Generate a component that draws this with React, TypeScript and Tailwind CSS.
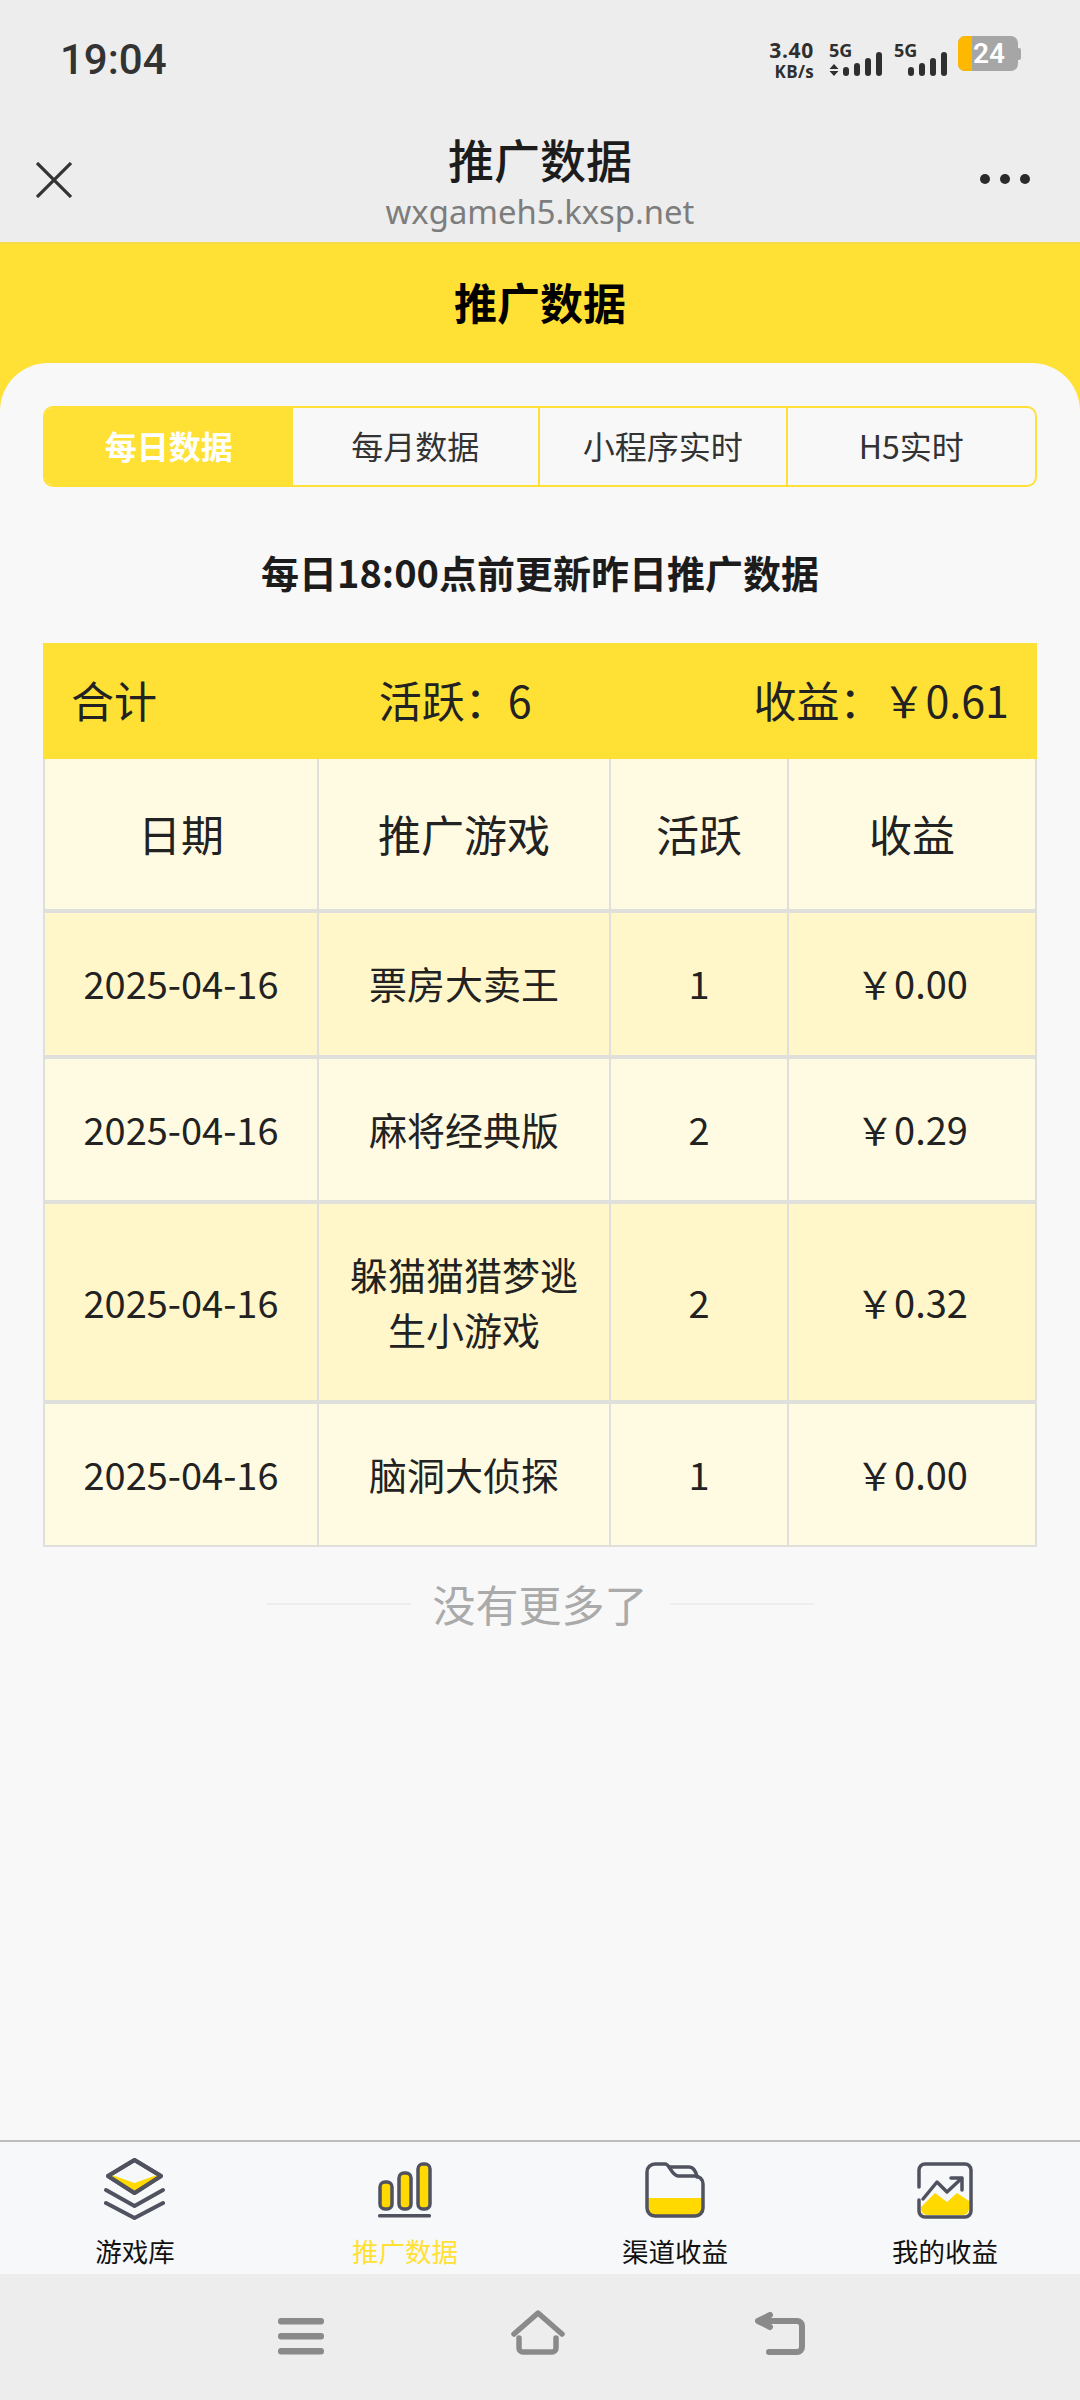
const Bars = ({ x }: { x: number }) => (
  <g fill="#2f2f2f">
    <rect x={x} y="15" width="6" height="9" rx="3" />
    <rect x={x + 11} y="11" width="6" height="13" rx="3" />
    <rect x={x + 22} y="6" width="6" height="18" rx="3" />
    <rect x={x + 33} y="0" width="6" height="24" rx="3" />
  </g>
);

const StatusBar = () => (
  <div className="h-[118px] flex items-start justify-between pl-[60px] pr-[60px] pt-[36px]">
    <div className="text-[42px] leading-[48px] font-medium text-[#333] font-['Roboto',sans-serif]">19:04</div>
    <div className="flex items-start font-['Open_Sans',sans-serif] font-bold text-[#2f2f2f] -mr-[1px] pt-[4px]">
      <div className="flex flex-col items-end">
        <span className="text-[21px] leading-[20px] tracking-[0.7px]">3.40</span>
        <span className="text-[17px] leading-[18px] mt-[3px] tracking-[0.3px]">KB/s</span>
      </div>
      <div className="ml-[15px] w-[54px]">
        <span className="text-[18px] leading-[20px] block">5G</span>
        <svg width="54" height="24" viewBox="0 0 54 24" className="mt-[-8px]">
          <path d="M0.5 17 L5 12 L9.5 17 Z M0.5 19 L9.5 19 L5 24 Z" fill="#2f2f2f" />
          <Bars x={14} />
        </svg>
      </div>
      <div className="ml-[11px] w-[54px]">
        <span className="text-[18px] leading-[20px] block">5G</span>
        <svg width="54" height="24" viewBox="0 0 54 24" className="mt-[-8px]">
          <Bars x={14} />
        </svg>
      </div>
      <div className="ml-[10px] mt-[-4px] flex items-center">
        <div className="w-[60px] h-[35px] rounded-[7px] overflow-hidden bg-[#a6a6a6] flex">
          <div className="w-[14px] bg-[#ffb800]" />
          <span className="text-[28px] leading-[35px] text-white font-semibold font-['Roboto',sans-serif] pl-[1px]">24</span>
        </div>
        <div className="w-[3px] h-[12px] bg-[#a6a6a6] rounded-r-[2px]" />
      </div>
    </div>
  </div>
);

const WechatBar = () => (
  <div className="h-[126px] flex items-start justify-between pl-[36px] pr-[50px] border-b-[2px] border-[#f5dc45]">
    <div className="w-[64px]">
      <svg width="36" height="36" viewBox="0 0 36 36" className="mt-[44px]">
        <path d="M1 1 L35 35 M35 1 L1 35" stroke="#333" strokeWidth="3.2" fill="none" />
      </svg>
    </div>
    <div className="flex flex-col items-center">
      <div className="text-[46px] leading-[60px] mt-[10px] font-medium text-[#1c1c1c] font-['Noto_Sans_CJK_SC',sans-serif]">推广数据</div>
      <div className="text-[32.8px] leading-[42px] mt-[3px] text-[#7d7d7d] font-['Noto_Sans',sans-serif]">wxgameh5.kxsp.net</div>
    </div>
    <svg width="50" height="10" viewBox="0 0 50 10" className="mt-[56px]">
      <circle cx="5" cy="5" r="5" fill="#2a2a2a" />
      <circle cx="25" cy="5" r="5" fill="#2a2a2a" />
      <circle cx="45" cy="5" r="5" fill="#2a2a2a" />
    </svg>
  </div>
);

const Tabs = () => (
  <div className="grid grid-cols-4 h-[81px] rounded-[10px] border-[2px] border-[#ffe135] overflow-hidden text-[32px] text-[#333]">
    <div className="bg-[#ffe135] text-white font-bold flex items-center justify-center pb-[4px]">每日数据</div>
    <div className="border-r-[2px] border-[#ffe135] flex items-center justify-center pb-[4px]">每月数据</div>
    <div className="border-r-[2px] border-[#ffe135] flex items-center justify-center pb-[4px]">小程序实时</div>
    <div className="flex items-center justify-center pb-[4px]">H5实时</div>
  </div>
);

const rowGrid = "grid grid-cols-[272px_290px_176px_246px] gap-x-[2px]";

const rows = [
  { date: "2025-04-16", game: "票房大卖王", active: "1", money: "￥0.00", h: "h-[142px]", bg: "bg-[#fff7ca]", pb: "pb-[4px]" },
  { date: "2025-04-16", game: "麻将经典版", active: "2", money: "￥0.29", h: "h-[141px]", bg: "bg-[#fffbe3]", pb: "pb-[2px]" },
  { date: "2025-04-16", game: "躲猫猫猎梦逃生小游戏", active: "2", money: "￥0.32", h: "h-[196px]", bg: "bg-[#fff7ca]", pb: "pb-[2px]" },
  { date: "2025-04-16", game: "脑洞大侦探", active: "1", money: "￥0.00", h: "h-[141px]", bg: "bg-[#fffbe3]", pb: "pb-[2px]" },
];

const Table = () => (
  <div>
    <div className="h-[116px] bg-[#ffe135] flex items-center justify-between px-[28px] pb-[4px] text-[43px] text-[#222]">
      <span>合计</span>
      <span>活跃：6</span>
      <span>收益：￥0.61</span>
    </div>
    <div className="bg-[#dfdfdb] p-[2px] pt-0 flex flex-col gap-y-[4px]">
      <div className={`${rowGrid} h-[150px] text-[43px] text-[#222]`}>
        {["日期", "推广游戏", "活跃", "收益"].map((t) => (
          <div key={t} className="bg-[#fffbe3] flex items-center justify-center pb-[1px]">{t}</div>
        ))}
      </div>
      {rows.map((r) => (
        <div key={r.game} className={`${rowGrid} ${r.h} text-[38px] leading-[55px] text-[#222]`}>
          <div className={`${r.bg} ${r.pb} flex items-center justify-center`}>{r.date}</div>
          <div className={`${r.bg} ${r.pb} flex items-center justify-center text-center px-[30px]`}>{r.game}</div>
          <div className={`${r.bg} ${r.pb} flex items-center justify-center`}>{r.active}</div>
          <div className={`${r.bg} ${r.pb} flex items-center justify-center`}>{r.money}</div>
        </div>
      ))}
    </div>
  </div>
);

const NoMore = () => (
  <div className="mt-[26px] flex items-center justify-center gap-[22px] text-[43px] leading-[60px] text-[#aaa]">
    <div className="w-[144px] h-[2px] bg-[#eeeeee] mt-[2px]" />
    <span>没有更多了</span>
    <div className="w-[144px] h-[2px] bg-[#eeeeee] mt-[2px]" />
  </div>
);

const stroke = "#50525f";
const gold = "#ffd900";

const LayersIcon = () => (
  <svg width="64" height="64" viewBox="0 0 64 64" fill="none">
    <path d="M31.5 4 L58 20 L31.5 37 L5 20 Z" fill="#f7f8fa" stroke={stroke} strokeWidth="4" strokeLinejoin="round" />
    <path d="M9 19 L31.5 27 L54 19 L57 20 L31.5 35 L6 20 Z" fill={gold} />
    <path d="M31.5 4 L58 20 L31.5 37 L5 20 Z" stroke={stroke} strokeWidth="4" strokeLinejoin="round" />
    <path d="M3 34 L31.5 50 L60 34" stroke={stroke} strokeWidth="4" strokeLinecap="round" strokeLinejoin="round" />
    <path d="M3 47 L31.5 62 L60 47" stroke={stroke} strokeWidth="4" strokeLinecap="round" strokeLinejoin="round" />
  </svg>
);

const BarsIcon = () => (
  <svg width="56" height="56" viewBox="0 0 56 56" fill="none">
    <rect x="3" y="20" width="12" height="27" rx="5" fill={gold} stroke={stroke} strokeWidth="3.5" />
    <rect x="22" y="11" width="12" height="36" rx="5" fill={gold} stroke={stroke} strokeWidth="3.5" />
    <rect x="41" y="2" width="12" height="45" rx="5" fill={gold} stroke={stroke} strokeWidth="3.5" />
    <rect x="1" y="52" width="53" height="3.5" rx="1.5" fill={stroke} />
  </svg>
);

const FolderIcon = () => (
  <svg width="60" height="56" viewBox="0 0 60 56" fill="none">
    <path d="M3 36 H57 V46 A8 8 0 0 1 49 54 H11 A8 8 0 0 1 3 46 Z" fill={gold} />
    <path d="M2 46 V10 A8 8 0 0 1 10 2 H20 C25 2 26 13 33 14 H50 A8 8 0 0 1 58 22 V46 A8 8 0 0 1 50 54 H10 A8 8 0 0 1 2 46 Z" stroke={stroke} strokeWidth="3.5" strokeLinejoin="round" />
    <path d="M25 5 H44 C49 5 51 10 52 15" stroke={stroke} strokeWidth="3.5" strokeLinecap="round" />
  </svg>
);

const ChartIcon = () => (
  <svg width="56" height="57" viewBox="0 0 56 57" fill="none">
    <path d="M4 45 L18 31 L30 40 L40 31 L52 39 V47 A6 6 0 0 1 46 53 H10 A6 6 0 0 1 4 47 Z" fill={gold} />
    <path d="M2 25 V8 A6 6 0 0 1 8 2 H48 A6 6 0 0 1 54 8 V49 A6 6 0 0 1 48 55 H8 A6 6 0 0 1 2 49 V38" stroke={stroke} strokeWidth="3.5" strokeLinecap="round" />
    <path d="M6 37 L20 20 L30 30 L45 16 M34 16 H45 V28" stroke={stroke} strokeWidth="3.5" strokeLinecap="round" strokeLinejoin="round" />
  </svg>
);

const tabsBottom = [
  { label: "游戏库", icon: <LayersIcon />, active: false, pt: "pt-[14px]" },
  { label: "推广数据", icon: <BarsIcon />, active: true, pt: "pt-[20px]" },
  { label: "渠道收益", icon: <FolderIcon />, active: false, pt: "pt-[20px]" },
  { label: "我的收益", icon: <ChartIcon />, active: false, pt: "pt-[20px]" },
];

const BottomNav = () => (
  <div className="h-[134px] bg-[#f7f8fa] border-t-[2px] border-[#bdbdbd] grid grid-cols-4">
    {tabsBottom.map((t) => (
      <div key={t.label} className={`relative flex flex-col items-center ${t.pt}`}>
        {t.icon}
        <span className={`absolute top-[91px] text-[26.5px] leading-[36px] ${t.active ? "text-[#ffe135]" : "text-[#111]"}`}>{t.label}</span>
      </div>
    ))}
  </div>
);

const SystemBar = () => (
  <div className="h-[126px] bg-[#ededed] flex items-start pl-[278px] pt-[36px]">
    <svg width="46" height="38" viewBox="0 0 46 38" className="mt-[8px]">
      <rect x="0" y="0" width="46" height="6.5" rx="3" fill="#8a8a8a" />
      <rect x="0" y="15" width="46" height="6.5" rx="3" fill="#8a8a8a" />
      <rect x="0" y="30" width="46" height="6.5" rx="3" fill="#8a8a8a" />
    </svg>
    <svg width="54" height="46" viewBox="0 0 54 46" fill="none" className="ml-[187px]">
      <path d="M3 24 L27 3 L51 24 M8 28 V38 A4 4 0 0 0 12 42 H41 A4 4 0 0 0 45 38 V28" stroke="#8a8a8a" strokeWidth="5.5" strokeLinecap="round" strokeLinejoin="round" />
    </svg>
    <svg width="52" height="46" viewBox="0 0 52 46" fill="none" className="ml-[190px] mt-[2px]">
      <path d="M15 3 L3 9 L15 15 M6 9 H42 A5 5 0 0 1 47 14 V35 A5 5 0 0 1 42 40 H14" stroke="#8a8a8a" strokeWidth="6" strokeLinecap="round" strokeLinejoin="round" />
    </svg>
  </div>
);

export default function App() {
  return (
    <div className="w-[1080px] h-[2400px] flex flex-col bg-[#ededed] font-['Noto_Sans_CJK_SC',sans-serif] overflow-hidden">
      <StatusBar />
      <WechatBar />
      <div className="flex-1 bg-[#ffe135] flex flex-col min-h-0">
        <div className="h-[119px] flex items-center justify-center text-[43px] font-bold text-black pb-[4px]">推广数据</div>
        <div className="flex-1 bg-[#f8f8f8] rounded-t-[48px] px-[43px] pt-[43px]">
          <Tabs />
          <div className="h-[156px] flex items-center justify-center text-[38px] font-bold text-[#1c1c1c] pt-[12px]">每日18:00点前更新昨日推广数据</div>
          <Table />
          <NoMore />
        </div>
      </div>
      <BottomNav />
      <SystemBar />
    </div>
  );
}
